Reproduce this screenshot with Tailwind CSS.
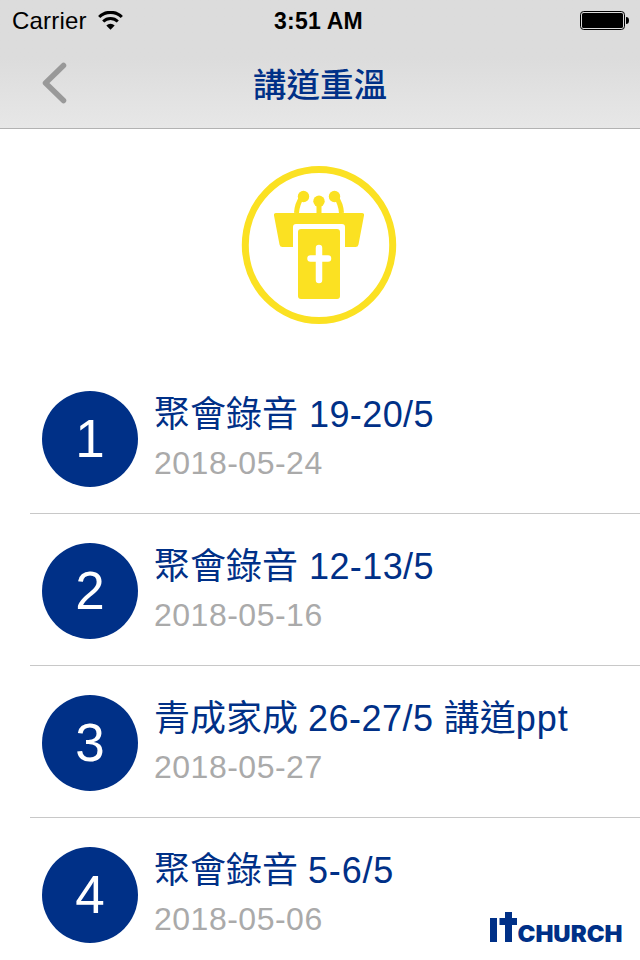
<!DOCTYPE html>
<html lang="zh-Hant">
<head>
    <meta charset="UTF-8">
    <meta name="viewport" content="width=device-width, initial-scale=1.0">
    <title>講道重溫</title>
    <script src="https://cdn.jsdelivr.net/npm/@tailwindcss/browser@4"></script>
</head>
<body class="relative h-[960px] w-[640px] overflow-hidden bg-white font-['Liberation_Sans','Noto_Sans_CJK_TC',sans-serif]">

    <header class="h-[129px] border-b border-[#b2b2b2] bg-linear-to-b from-[#dcdcdc] from-45% to-[#e7e7e7]">
        <!-- Status bar -->
        <div class="grid h-10 grid-cols-3 items-center pl-3 pr-[11px] text-black">
            <div class="flex items-center gap-[11px]">
                <span class="pt-0.5 text-[24px] leading-[38px] tracking-[0.2px]">Carrier</span>
                <svg class="h-[19px] w-[25px]" viewBox="0 0 25 19" fill="none" stroke="#000">
                    <path d="M1.2 6a16 16 0 0 1 22.6 0" stroke-width="3.1"/>
                    <path d="M5.2 10.500a10.3 10.3 0 0 1 14.6 0" stroke-width="2.9"/>
                    <path d="M8.3 14.400a6 6 0 0 1 8.4 0L12.5 18.800Z" fill="#000" stroke="none"/>
                </svg>
            </div>
            <span class="pr-1 pt-0.5 text-center text-[23px] font-bold leading-[38px] tracking-[0.2px]">3:51 AM</span>
            <svg class="h-[19px] w-[49px] justify-self-end" viewBox="0 0 49 19">
                <rect x=".5" y=".5" width="44" height="18" rx="3.2" fill="none" stroke="#000"/>
                <rect x="2" y="2" width="41" height="15" rx="1.6"/>
                <path d="M46 6c2 0 3 1 3 3.500s-1 3.500-3 3.500Z"/>
            </svg>
        </div>
        <!-- Nav bar -->
        <div class="grid h-[88px] grid-cols-[100px_1fr_100px] items-center">
            <svg class="-mt-0.5 ml-[42px] h-[42px] w-[26px]" viewBox="0 0 26 42" fill="none" stroke="#999" stroke-width="5.500" stroke-linecap="round" stroke-linejoin="round">
                <path d="M21.500 3.500 3.500 21l18 17.500"/>
            </svg>
            <h1 class="pt-1 text-center text-[33.500px] font-medium leading-[84px] text-[#003087]">講道重溫</h1>
        </div>
    </header>

    <main>
        <div class="flex h-[233px] justify-center pr-0.5 pt-[36px]">
            <svg class="h-[160px] w-[156px]" viewBox="241 165 156 160" fill="#fbe122">
                <ellipse cx="319" cy="245" rx="73.700" ry="75.500" fill="none" stroke="#fbe122" stroke-width="7"/>
                <circle cx="303.500" cy="196.500" r="5.700"/>
                <circle cx="319" cy="201.300" r="5.700"/>
                <circle cx="334.500" cy="196.500" r="5.700"/>
                <path d="M302 197q-5 7-5.500 16M319 202v11M336 197q5 7 5.500 16" fill="none" stroke="#fbe122" stroke-width="5"/>
                <path d="M276 213h86q2.500 0 2 2.500l-5.500 29q-.5 2.500-3 2.500H345v-20q0-3-3-3h-46q-3 0-3 3v20h-10.500q-2.500 0-3-2.500l-5.500-29q-.5-2.500 2-2.500Z"/>
                <rect x="298" y="229" width="42" height="70" rx="3"/>
                <path d="M319 248v32M310.500 258.500h17.500" stroke="#fff" stroke-width="6.500" stroke-linecap="round"/>
            </svg>
        </div>

        <ul class="text-[#003087]">
            <li class="ml-[30px] flex h-[152px] gap-4 border-b border-[#c8c8c8] pl-3 pt-[29px]">
                <div class="size-24 rounded-full bg-[#003087] text-center text-[53px] leading-[96px] text-white">1</div>
                <div class="whitespace-nowrap">
                    <p class="flex h-12 items-center gap-[11px] text-[36px] leading-[46px]"><span class="font-normal">聚會錄音</span><span class="tracking-[0.4px]">19-20/5</span></p>
                    <p class="text-[32px] leading-12 tracking-[0.5px] text-[#aaa]">2018-05-24</p>
                </div>
            </li>
            <li class="ml-[30px] flex h-[152px] gap-4 border-b border-[#c8c8c8] pl-3 pt-[29px]">
                <div class="size-24 rounded-full bg-[#003087] text-center text-[53px] leading-[96px] text-white">2</div>
                <div class="whitespace-nowrap">
                    <p class="flex h-12 items-center gap-[11px] text-[36px] leading-[46px]"><span class="font-normal">聚會錄音</span><span class="tracking-[0.4px]">12-13/5</span></p>
                    <p class="text-[32px] leading-12 tracking-[0.5px] text-[#aaa]">2018-05-16</p>
                </div>
            </li>
            <li class="ml-[30px] flex h-[152px] gap-4 border-b border-[#c8c8c8] pl-3 pt-[29px]">
                <div class="size-24 rounded-full bg-[#003087] text-center text-[53px] leading-[96px] text-white">3</div>
                <div class="whitespace-nowrap">
                    <p class="flex h-12 items-center gap-[10px] text-[36px] leading-[46px]"><span class="font-normal">青成家成</span><span class="tracking-[0.5px]">26-27/5</span><span class="flex tracking-[1px]"><span class="font-normal tracking-normal">講道</span>ppt</span></p>
                    <p class="text-[32px] leading-12 tracking-[0.5px] text-[#aaa]">2018-05-27</p>
                </div>
            </li>
            <li class="ml-[30px] flex h-[152px] gap-4 pl-3 pt-[29px]">
                <div class="size-24 rounded-full bg-[#003087] text-center text-[53px] leading-[96px] text-white">4</div>
                <div class="whitespace-nowrap">
                    <p class="flex h-12 items-center gap-[10px] text-[36px] leading-[46px]"><span class="font-normal">聚會錄音</span><span class="tracking-[0.8px]">5-6/5</span></p>
                    <p class="text-[32px] leading-12 tracking-[0.5px] text-[#aaa]">2018-05-06</p>
                </div>
            </li>
        </ul>
    </main>

    <!-- Floating logo -->
    <svg class="absolute bottom-[14px] right-4 h-[36px] w-[136px]" viewBox="0 0 136 36" fill="#003087">
        <path d="M2 8h7v24H2ZM17 2h7v6h5v7h-5v17h-7V15h-5.500V8H17Z"/>
        <text x="29.500" y="31.500" textLength="105" lengthAdjust="spacingAndGlyphs" class="font-['Inter'] text-[22.500px] font-black">CHURCH</text>
    </svg>
</body>
</html>
